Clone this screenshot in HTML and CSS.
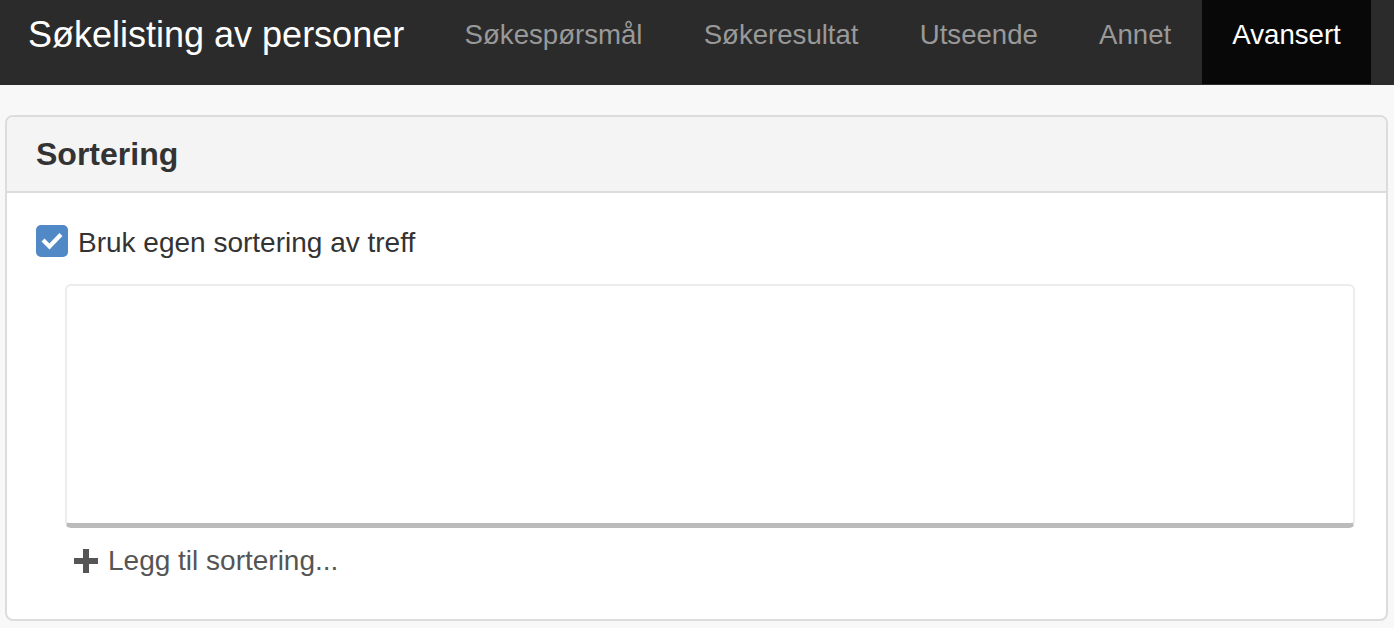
FILE: index.html
```html
<!DOCTYPE html>
<html lang="no">
<head>
<meta charset="utf-8">
<title>Søkelisting av personer</title>
<link rel="stylesheet" href="styles.css">
</head>
<body>
<header class="navbar">
  <div class="brand">Søkelisting av personer</div>
  <nav class="nav">
    <a class="nav-item">Søkespørsmål</a>
    <a class="nav-item">Søkeresultat</a>
    <a class="nav-item">Utseende</a>
    <a class="nav-item">Annet</a>
    <a class="nav-item active">Avansert</a>
  </nav>
</header>
<main class="content">
  <section class="panel">
    <div class="panel-heading">Sortering</div>
    <div class="panel-body">
      <label class="check-row">
        <span class="checkbox">
          <svg viewBox="0 0 32 32" width="32" height="32"><rect width="32" height="32" rx="5" fill="#5189c6"/><path d="M8.5 16.5 L13.5 21.5 L23.5 11" fill="none" stroke="#fff" stroke-width="4.2" stroke-linecap="square" stroke-linejoin="miter"/></svg>
        </span>
        <span class="check-label">Bruk egen sortering av treff</span>
      </label>
      <div class="sort-box"></div>
      <div class="add-row">
        <svg class="plus" viewBox="0 0 24 24" width="24" height="24"><rect x="9" y="0" width="6" height="24" fill="#555"/><rect x="0" y="9" width="24" height="6" fill="#555"/></svg>
        <span>Legg til sortering...</span>
      </div>
    </div>
  </section>
</main>
</body>
</html>
```
FILE: styles.css
```css
* { box-sizing: border-box; }
html, body { margin: 0; padding: 0; }
body {
  background: #f8f8f8;
  font-family: "Liberation Sans", Arial, Helvetica, sans-serif;
  color: #333;
}
.navbar {
  height: 85px;
  background: #2b2b2b;
  display: flex;
  align-items: flex-start;
}
.brand {
  flex: 0 0 434px;
  padding: 15px 0 0 28px;
  font-size: 36px;
  line-height: 40px;
  color: #fff;
  white-space: nowrap;
}
.nav {
  display: flex;
}
.nav-item {
  display: block;
  height: 84px;
  padding: 15px 30.6px 0;
  font-size: 27.6px;
  line-height: 40px;
  color: #999;
  white-space: nowrap;
}
.nav-item.active {
  background: #080808;
  color: #fff;
}
.content {
  padding: 30px 6px 0 5px;
}
.panel {
  background: #fff;
  border: 2px solid #dcdcdc;
  border-radius: 8px;
  overflow: hidden;
}
.panel-heading {
  height: 76px;
  background: #f4f4f4;
  border-bottom: 2px solid #dcdcdc;
  padding: 0 29px;
  font-size: 32px;
  font-weight: bold;
  line-height: 74px;
  color: #333;
}
.panel-body {
  padding: 32px 31px 38px 29px;
}
.check-row {
  display: flex;
  align-items: center;
  gap: 10px;
  height: 32px;
}
.checkbox {
  display: block;
  width: 32px;
  height: 32px;
}
.checkbox svg { display: block; }
.check-label {
  font-size: 28px;
  line-height: 32px;
  padding-top: 3px;
  color: #333;
}
.sort-box {
  margin: 27px 0 0 29px;
  height: 244px;
  border: 2px solid #ececec;
  border-bottom: 5px solid #bbb;
  border-radius: 6px;
  background: #fff;
}
.add-row {
  margin: 13px 0 0 38px;
  display: flex;
  align-items: center;
  gap: 10px;
  height: 40px;
  font-size: 28px;
  line-height: 40px;
  color: #555;
}
.plus { display: block; }
```
